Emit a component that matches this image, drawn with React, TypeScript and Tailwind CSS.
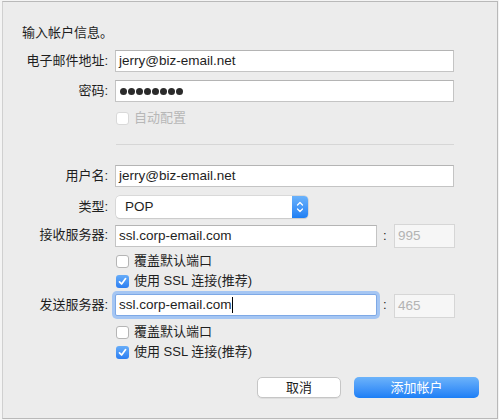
import React from "react";

const font = "font-['Liberation_Sans','Noto_Sans_CJK_SC',sans-serif]";

function Label({ children }: { children: React.ReactNode }) {
  return <div className="text-right text-[13px] text-[#1e1e1e] leading-[22px] pr-[7px]">{children}</div>;
}

function TextBox({ value, className = "" }: { value: string; className?: string }) {
  return (
    <div className={`h-[22px] bg-white border border-[#c4c4c4] border-t-[#b4b4b4] pl-[3px] text-[13.5px] leading-[20px] text-[#1e1e1e] ${className}`}>
      {value}
    </div>
  );
}

function PortBox({ value }: { value: string }) {
  return (
    <div className="w-[61px] h-[24px] bg-[#f6f6f6] border border-[#d6d6d6] pl-[3px] text-[13.5px] leading-[22px] text-[#b3b3b3]">
      {value}
    </div>
  );
}

function Check({ checked, disabled, label }: { checked?: boolean; disabled?: boolean; label: string }) {
  return (
    <div className="flex items-center h-[20px]">
      {checked ? (
        <span className="w-[13px] h-[13px] rounded-[3px] bg-gradient-to-b from-[#66acf8] to-[#2b7ef2] flex items-center justify-center">
          <svg width="9" height="9" viewBox="0 0 9 9">
            <path d="M1.5 4.8 L3.6 7 L7.6 1.6" fill="none" stroke="white" strokeWidth="1.7" strokeLinecap="round" strokeLinejoin="round" />
          </svg>
        </span>
      ) : (
        <span
          className={`w-[13px] h-[13px] rounded-[3px] bg-white border ${disabled ? "border-[#d9d9d9]" : "border-[#b5b5b5]"}`}
        />
      )}
      <span className={`ml-[5px] text-[13px] ${disabled ? "text-[#b7b7b7]" : "text-[#1e1e1e]"}`}>{label}</span>
    </div>
  );
}

export default function App() {
  return (
    <div className={`w-[499px] h-[420px] bg-[#f4f4f4] pt-[1px] pl-[2px] ${font}`}>
      <div className="w-[496px] h-[418px] bg-[#ececec] border-t border-l border-r border-b border-[#b9b9b9] border-l-[#d0d0d0]">
        <div className="pt-[23px] pl-[19px] text-[13px] leading-[16px] text-[#1e1e1e]">输入帐户信息。</div>

        <div className="grid grid-cols-[112px_262px_17px_61px] mt-[9px]">
          <Label>电子邮件地址:</Label>
          <TextBox value="jerry@biz-email.net" className="col-span-3 w-[339px]" />

          <div className="col-span-4 h-[8px]" />
          <Label>密码:</Label>
          <div className="col-span-3 w-[339px] h-[22px] bg-white border border-[#c4c4c4] border-t-[#b4b4b4] pl-[4px] flex items-center gap-[1px]">
            {Array.from({ length: 8 }).map((_, i) => (
              <span key={i} className="w-[7px] h-[7px] rounded-full bg-[#2a2a2a]" />
            ))}
          </div>

          <div className="col-span-4 h-[7px]" />
          <div />
          <div className="col-span-3 pl-px h-[18px] flex items-start">
            <div className="-mt-[1px]">
              <Check disabled label="自动配置" />
            </div>
          </div>

          <div className="col-span-4 h-[17px]" />
          <div />
          <div className="col-span-3 w-[338px] ml-px h-px bg-[#d6d6d6]" />
          <div className="col-span-4 h-[20px]" />

          <Label>用户名:</Label>
          <TextBox value="jerry@biz-email.net" className="col-span-3 w-[339px]" />

          <div className="col-span-4 h-[9px]" />
          <Label>类型:</Label>
          <div className="col-span-3 flex">
            <div className="ml-px w-[192px] h-[22px] rounded-[4px] bg-white shadow-[0_0_0_0.5px_#c6c6c6,0_1px_1px_rgba(0,0,0,0.12)] flex overflow-hidden">
              <span className="flex-1 pl-[9px] text-[13.5px] leading-[22px] text-[#1e1e1e]">POP</span>
              <span className="w-[16px] h-full bg-gradient-to-b from-[#6ab2fb] to-[#1d7ff4] flex items-center justify-center">
                <svg width="8" height="14" viewBox="0 0 8 14">
                  <path d="M1.5 5 L4 2.5 L6.5 5 M1.5 9 L4 11.5 L6.5 9" fill="none" stroke="white" strokeWidth="1.3" strokeLinecap="round" strokeLinejoin="round" />
                </svg>
              </span>
            </div>
          </div>

          <div className="col-span-4 h-[6px]" />
          <Label>接收服务器:</Label>
          <TextBox value="ssl.corp-email.com" className="mt-px" />
          <div className="text-[13px] leading-[24px] text-[#1e1e1e] pl-[6px]">:</div>
          <PortBox value="995" />

          <div />
          <div className="col-span-3 pl-px pt-[3px]">
            <Check label="覆盖默认端口" />
            <Check checked label="使用 SSL 连接(推荐)" />
          </div>

          <div className="col-span-4 h-[3px]" />
          <Label>发送服务器:</Label>
          <div className="h-[22px] bg-white border border-[#7ea9e6] rounded-[2px] shadow-[0_0_0_3px_#a5c6f3] pl-[3px] text-[13.5px] leading-[20px] text-[#1e1e1e] flex items-center">
            ssl.corp-email.com
            <span className="w-px h-[16px] bg-black" />
          </div>
          <div className="text-[13px] leading-[22px] text-[#1e1e1e] pl-[6px]">:</div>
          <PortBox value="465" />

          <div />
          <div className="col-span-3 pl-px pt-[4px]">
            <Check label="覆盖默认端口" />
            <Check checked label="使用 SSL 连接(推荐)" />
          </div>
        </div>

        <div className="flex justify-end gap-[13px] pr-[18px] mt-[15px]">
          <button className="w-[84px] h-[21px] rounded-[5px] bg-white border border-[#c6c6c6] shadow-[0_1px_0_rgba(0,0,0,0.06)] text-[13px] leading-[19px] text-[#1e1e1e]">
            取消
          </button>
          <button className="w-[125px] h-[21px] rounded-[5px] bg-gradient-to-b from-[#6cb3fa] to-[#1a7ef6] text-[13px] leading-[21px] text-white">
            添加帐户
          </button>
        </div>
      </div>
    </div>
  );
}
